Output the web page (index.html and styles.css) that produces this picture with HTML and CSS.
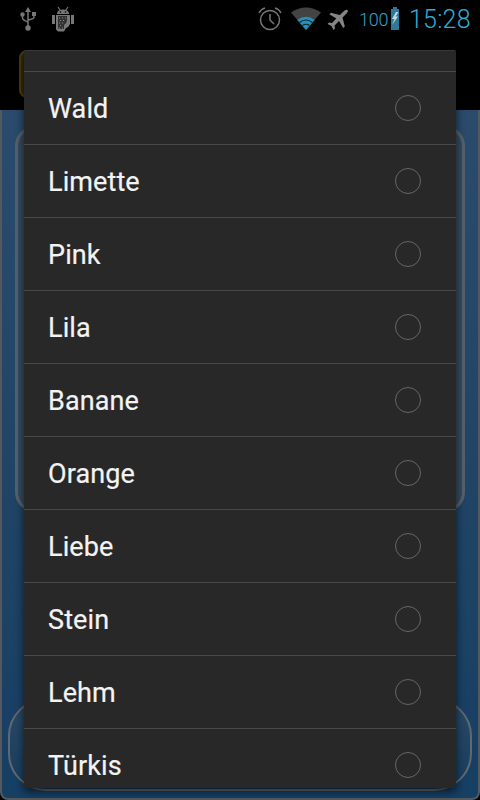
FILE: index.html
```
<!DOCTYPE html>
<html lang="de">
<head>
<meta charset="utf-8">
<title>Farbe</title>
<link rel="stylesheet" href="styles.css">
</head>
<body>
<div class="screen">
  <header class="status">
    <div class="notifications">
      <svg class="usb" width="18" height="26" viewBox="0 0 18 26" fill="none" stroke="#777" stroke-width="1.500"><path d="M8 4v17M2.500 9v3q0 2 5.500 4M14 8v3q0 2-6 3"/><path d="M8 1l3 5H5zM12 6h4v4h-4z" fill="#777" stroke="none"/><circle cx="2.500" cy="8.500" r="2.200" fill="#777" stroke="none"/><circle cx="8" cy="22" r="2.700" fill="#777" stroke="none"/></svg>
      <svg class="droid" width="24" height="26" viewBox="0 0 24 26"><path d="M6 8q0-4.500 6-4.500T18 8z" fill="#777"/><path d="M7 1l2 3M17 1l-2 3" stroke="#777" stroke-width="1.200"/><path d="M1 9h3v9H1zM20 9h3v9h-3zM5 9h14v9q-1 3-4 4l-2 3.500H7l-2-2z" fill="#777"/><path d="M7 10h9v4q0 3-3 5v4H8q-1 0-1-2z" fill="#303030"/><path d="M8 12h7M9 14.500h6M8 17h5M9 19.500h3M8 22h4" stroke="#888" stroke-dasharray="1.200 1.800"/><circle cx="9.500" cy="6" r=".8"/><circle cx="14.500" cy="6" r=".8"/></svg>
    </div>
    <div class="system">
      <svg class="alarm" width="24" height="24" viewBox="0 0 24 24" fill="none" stroke="#777" stroke-width="1.500"><circle cx="12" cy="13" r="9.500"/><path d="M12 7v6l4 4M1 6q2-4 6-5M23 6q-2-4-6-5"/></svg>
      <svg class="wifi" width="30" height="23" viewBox="0 0 30 23"><path d="M0 5.500Q15-4.500 30 5.500L15 23z" fill="#434343"/><path d="M6.300 13Q15 6.500 23.700 13L15 23z" fill="#2790b6"/><path d="M8.500 15.500q6.500-5 13 0M11.500 18.500q3.500-2.500 7 0" fill="none" stroke="#07232d" stroke-width="1.200"/></svg>
      <svg class="plane" width="22" height="22" viewBox="0 0 22 22"><path d="M20.500 1q1.200 1-.5 3l-4.500 4.500 2.300 9-1.500 1.500-4.300-7-4.500 4.500.5 3-1.500 1.500-2-4-4-2L2 13.500l3 .4 4.300-4.400-7-4.200L4 3.700l8.800 2.200 4.700-4.400q2-1.300 3-.5z" fill="#858585"/></svg>
      <span class="percent">100</span>
      <svg class="battery" width="8" height="23" viewBox="0 0 8 23"><path d="M2 0h4v2h2v21H0V2h2z" fill="#2f7897"/><path d="M5 5L1 12h2.500L1 18l6-8.500H4.500L7.500 5z" fill="#c3dbe2"/></svg>
      <span class="clock">15:28</span>
    </div>
  </header>
  <div class="actionbar"><div class="appicon"></div></div>
  <main class="content">
    <section class="preview"></section>
    <section class="button"></section>
  </main>
  <div class="dialog">
    <div class="row partial"></div>
    <div class="row"><span>Wald</span><i class="radio"></i></div>
    <div class="row"><span>Limette</span><i class="radio"></i></div>
    <div class="row"><span>Pink</span><i class="radio"></i></div>
    <div class="row"><span>Lila</span><i class="radio"></i></div>
    <div class="row"><span>Banane</span><i class="radio"></i></div>
    <div class="row"><span>Orange</span><i class="radio"></i></div>
    <div class="row"><span>Liebe</span><i class="radio"></i></div>
    <div class="row"><span>Stein</span><i class="radio"></i></div>
    <div class="row"><span>Lehm</span><i class="radio"></i></div>
    <div class="row"><span>Türkis</span><i class="radio"></i></div>
  </div>
</div>
</body>
</html>
```
FILE: styles.css
```
* { box-sizing: border-box; }
body { margin: 0; background: #000; font-family: Roboto, sans-serif; }
.screen { position: relative; width: 480px; height: 800px; overflow: hidden; display: flex; flex-direction: column; background: #000; }
svg { display: block; flex: none; }
.status { height: 38px; flex: none; display: flex; justify-content: space-between; padding: 0 9px 0 20px; }
.notifications, .system { display: flex; align-items: flex-start; }
.usb { margin-top: 6px; }
.droid { margin: 6px 0 0 13px; }
.alarm { margin-top: 7px; }
.wifi { margin: 7px 0 0 9px; }
.plane { margin: 9px 0 0 6px; }
.percent { margin: 9px 0 0 10px; width: 30px; font-size: 18px; line-height: 22px; font-weight: 300; letter-spacing: -.2px; color: #2ea5d0; }
.battery { margin: 7px 0 0 2px; }
.clock { margin: 5px 0 0 10px; width: 62px; font-size: 25px; line-height: 30px; font-weight: 300; letter-spacing: .2px; color: #30acd9; white-space: nowrap; }
.actionbar { height: 72px; flex: none; padding: 12px 19px; }
.appicon { width: 48px; height: 48px; border: 2px solid #4d3b0d; border-radius: 8px; background: #35290a; }
.content { height: 690px; flex: none; display: flex; flex-direction: column; justify-content: space-between; padding: 16px 6px 7px; border: 2px solid #55585c; border-top: 0; border-radius: 0 0 8px 8px; background: linear-gradient(#2a4b6c, #214465 55%, #163f64); }
.preview { height: 386px; margin: 0 7px; border: 3px solid #55616b; border-radius: 20px; background: #344b60; }
.button { height: 93px; border: 2px solid #62686d; border-radius: 38px; background: linear-gradient(#294965, #183d5f); }
.dialog { position: absolute; left: 24px; top: 50px; width: 432px; height: 738px; overflow: hidden; border-top: 1px solid #383838; border-radius: 2px; background: #282828; box-shadow: 0 3px 9px rgba(0, 0, 0, .65); }
.row { height: 73px; display: flex; align-items: center; justify-content: space-between; padding: 0 35px 0 24px; border-bottom: 1px solid #484848; color: #f3f3f3; font-size: 27px; line-height: 32px; letter-spacing: .1px; -webkit-text-stroke: .2px #f3f3f3; }
.row span { position: relative; top: 1px; }
.partial { height: 21px; }
.radio { width: 26px; height: 26px; border: 1.500px solid #666; border-radius: 50%; }
```
